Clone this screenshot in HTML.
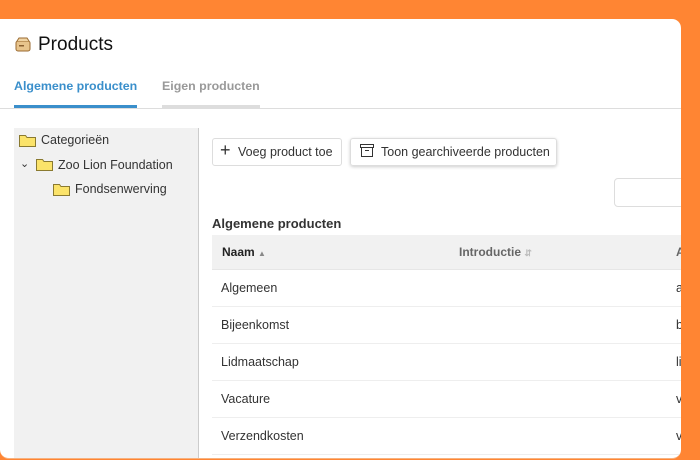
<!DOCTYPE html>
<html><head><style>
*{margin:0;padding:0;box-sizing:border-box}
body{width:700px;height:460px;background:#ff8533;font-family:"Liberation Sans",sans-serif;position:relative;overflow:hidden;color:#333}
.panel{position:absolute;left:0;top:19px;width:681px;height:440px;background:#fff;border-radius:0 9px 9px 9px;overflow:hidden;border-bottom:1px solid #f7b27f}
.abs{position:absolute}
.t{font-size:12.5px;color:#333;white-space:nowrap}
.row{position:absolute;left:212px;width:470px;height:37px;border-bottom:1px solid #eee}
.row span{position:absolute;top:11px;font-size:12.5px;color:#333}
</style></head><body>
<div class="panel">
<svg class="abs" style="left:15px;top:18px" width="16" height="15" viewBox="0 0 16 15"><rect x="1" y="4" width="14" height="10" rx="2" fill="#e8c48c" stroke="#9a6a30"/><path d="M2 4 L4 1 H12 L14 4" fill="#f0d4a4" stroke="#9a6a30"/><rect x="4" y="8" width="5" height="1.5" fill="#8a6030"/></svg>
<div class="abs" style="left:38px;top:15px;font-size:19px;color:#111">Products</div>
<div class="abs" style="left:14px;top:60px;font-size:12.4px;font-weight:bold;color:#3a8fcb">Algemene producten</div>
<div class="abs" style="left:162px;top:60px;font-size:12.4px;font-weight:bold;color:#999">Eigen producten</div>
<div class="abs" style="left:0;top:89px;width:681px;height:1px;background:#ddd"></div>
<div class="abs" style="left:14px;top:86px;width:123px;height:3px;background:#3a8fcb"></div>
<div class="abs" style="left:162px;top:86px;width:98px;height:3px;background:#ddd"></div>
<div class="abs" style="left:14px;top:109px;width:185px;height:340px;background:#f1f1f1;border-right:1px solid #ccc"></div>
<svg class="abs" style="left:19px;top:115px" width="17" height="13"><path d="M0.5 1.5h6l1.5 2h8.5v9h-16z" fill="#fbe36a" stroke="#8a7a30"/></svg>
<div class="abs t" style="left:41px;top:114px">Categorieën</div>
<div class="abs t" style="left:20px;top:138px;font-size:11px">&#8964;</div>
<svg class="abs" style="left:36px;top:139px" width="17" height="13"><path d="M0.5 1.5h6l1.5 2h8.5v9h-16z" fill="#fbe36a" stroke="#8a7a30"/></svg>
<div class="abs t" style="left:58px;top:139px">Zoo Lion Foundation</div>
<svg class="abs" style="left:53px;top:164px" width="17" height="13"><path d="M0.5 1.5h6l1.5 2h8.5v9h-16z" fill="#fbe36a" stroke="#8a7a30"/></svg>
<div class="abs t" style="left:75px;top:163px">Fondsenwerving</div>
<div class="abs" style="left:212px;top:119px;width:130px;height:28px;border:1px solid #ddd;border-radius:3px"></div>
<div class="abs t" style="left:220px;top:121px;font-size:18px">+</div>
<div class="abs t" style="left:238px;top:126px">Voeg product toe</div>
<div class="abs" style="left:350px;top:119px;width:207px;height:28px;border:1px solid #ddd;border-radius:3px;box-shadow:0 1px 3px rgba(0,0,0,.2)"></div>
<svg class="abs" style="left:360px;top:125px" width="14" height="13"><rect x="0.5" y="0.5" width="13" height="3" fill="none" stroke="#333"/><rect x="1.5" y="3.5" width="11" height="9" fill="none" stroke="#333"/><path d="M5 6.5h4" stroke="#333"/></svg>
<div class="abs t" style="left:381px;top:126px">Toon gearchiveerde producten</div>
<div class="abs" style="left:614px;top:159px;width:80px;height:29px;border:1px solid #ddd;border-radius:4px"></div>
<div class="abs" style="left:212px;top:197px;font-size:13px;font-weight:bold;color:#333">Algemene producten</div>
<div class="abs" style="left:212px;top:216px;width:470px;height:35px;background:#f1f1f1;border-bottom:1px solid #e6e6e6"></div>
<div class="abs" style="left:222px;top:226px;font-size:12px;font-weight:bold;color:#222">Naam <span style="color:#888;font-size:8px">&#9650;</span></div>
<div class="abs" style="left:459px;top:226px;font-size:12px;font-weight:bold;color:#666">Introductie <span style="color:#bbb;font-size:9px">&#8693;</span></div>
<div class="abs" style="left:676px;top:226px;font-size:12px;font-weight:bold;color:#666">A</div>
<div class="row" style="top:251px"><span style="left:9px">Algemeen</span><span style="left:464px">a</span></div>
<div class="row" style="top:288px"><span style="left:9px">Bijeenkomst</span><span style="left:464px">b</span></div>
<div class="row" style="top:325px"><span style="left:9px">Lidmaatschap</span><span style="left:464px">li</span></div>
<div class="row" style="top:362px"><span style="left:9px">Vacature</span><span style="left:464px">v</span></div>
<div class="row" style="top:399px"><span style="left:9px">Verzendkosten</span><span style="left:464px">v</span></div>
</div>
</body></html>
